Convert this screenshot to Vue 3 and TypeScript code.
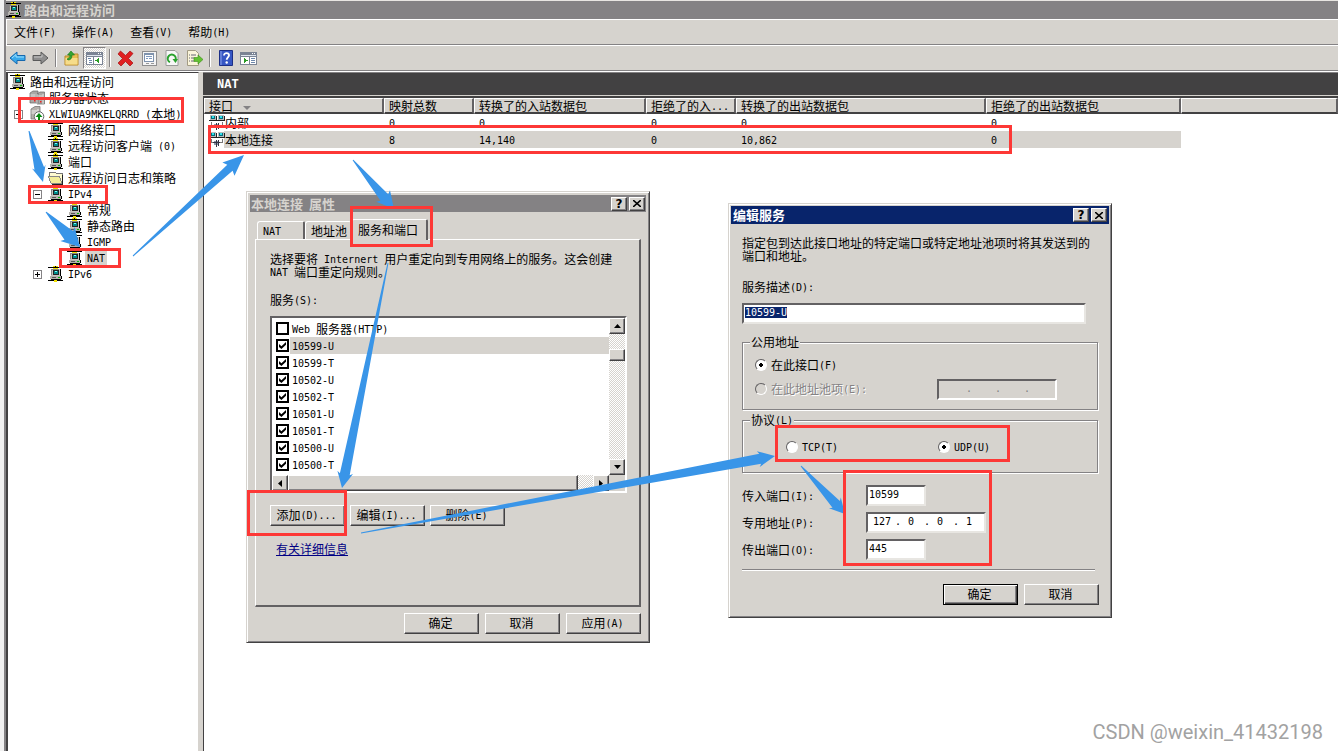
<script setup lang="ts">
import { computed, h, onMounted, reactive, ref } from 'vue'

/* Splits mixed text so that Latin runs keep half the width of an ideograph. */
const Txt = (props: { t: string }) =>
  h(
    'span',
    { class: 'txt' },
    (props.t.match(/[\x20-\x7e]+|[^\x20-\x7e]+/g) ?? []).map((run) =>
      /^[\x20-\x7e]/.test(run) ? h('span', { class: 'latin' }, run) : run,
    ),
  )
Txt.props = ['t']

type Glyph = 'net' | 'servers' | 'host' | 'folder'
interface TreeRow {
  label: string
  level: number
  icon: Glyph
  toggle?: '+' | '-'
  selected?: boolean
}

const menus = ['文件(F)', '操作(A)', '查看(V)', '帮助(H)']

const tree: TreeRow[] = [
  { label: '路由和远程访问', level: 0, icon: 'net' },
  { label: '服务器状态', level: 1, icon: 'servers' },
  { label: 'XLWIUA9MKELQRRD (本地)', level: 1, icon: 'host', toggle: '-' },
  { label: '网络接口', level: 2, icon: 'net' },
  { label: '远程访问客户端 (0)', level: 2, icon: 'net' },
  { label: '端口', level: 2, icon: 'net' },
  { label: '远程访问日志和策略', level: 2, icon: 'folder' },
  { label: 'IPv4', level: 2, icon: 'net', toggle: '-' },
  { label: '常规', level: 3, icon: 'net' },
  { label: '静态路由', level: 3, icon: 'net' },
  { label: 'IGMP', level: 3, icon: 'net' },
  { label: 'NAT', level: 3, icon: 'net', selected: true },
  { label: 'IPv6', level: 2, icon: 'net', toggle: '+' },
]

const columns = ['接口', '映射总数', '转换了的入站数据包', '拒绝了的入...', '转换了的出站数据包', '拒绝了的出站数据包', '']
const rows = [
  { cells: ['内部', '0', '0', '0', '0', '0'], selected: false },
  { cells: ['本地连接', '8', '14,140', '0', '10,862', '0'], selected: true },
]

const services = reactive([
  { name: 'Web 服务器(HTTP)', on: false },
  { name: '10599-U', on: true },
  { name: '10599-T', on: true },
  { name: '10502-U', on: true },
  { name: '10502-T', on: true },
  { name: '10501-U', on: true },
  { name: '10501-T', on: true },
  { name: '10500-U', on: true },
  { name: '10500-T', on: true },
])
const current = ref(1)

const description = ref('10599-U')
const address = ref('interface')
const protocol = ref('udp')
const inPort = ref('10599')
const outPort = ref('445')
const privateIp = reactive(['127', '0', '0', '1'])

const descriptionBox = ref<HTMLInputElement | null>(null)
onMounted(() => {
  descriptionBox.value?.focus()
  descriptionBox.value?.select()
})

/* Tapered arrows: start, tip, shaft half width, head half width, head length. */
const arrows = [
  [29, 131, 43, 182, 5, 7, 16],
  [46, 212, 80, 247, 6, 10, 18],
  [133, 256, 244, 155, 4, 9, 21],
  [353, 160, 394, 209, 5, 9, 17],
  [388, 263, 342, 488, 5, 8, 16],
  [361, 533, 775, 456, 5, 8, 17],
  [801, 466, 845, 514, 5, 8, 15],
]
const arrowPoints = computed(() =>
  arrows.map(([x1, y1, x2, y2, shaft, head, len]) => {
    const d = Math.hypot(x2 - x1, y2 - y1)
    const ux = (x2 - x1) / d
    const uy = (y2 - y1) / d
    const at = (back: number, side: number) =>
      `${(x2 - ux * back - uy * side).toFixed(1)},${(y2 - uy * back + ux * side).toFixed(1)}`
    return [at(d, 0.5), at(len - 2, shaft), at(len, head), at(0, 0), at(len, -head), at(len - 2, -shaft), at(d, -0.5)].join(' ')
  }),
)

const frames = [
  [18, 97, 184, 123],
  [28, 185, 108, 204],
  [59, 248, 121, 268],
  [208, 125, 1012, 154],
  [350, 206, 433, 247],
  [247, 490, 347, 536],
  [775, 425, 1010, 462],
  [843, 470, 992, 566],
]
</script>

<template>
  <div class="screen">
    <svg width="0" height="0" class="defs" aria-hidden="true">
      <symbol id="net" viewBox="0 0 16 16" shape-rendering="crispEdges">
        <path d="M0 1h15v1H0zM0 14h15v1H0zM6 0h3v2H6zM6 13h3v2H6z" fill="#000" />
        <path d="M5 0h2v1H5zM8 0h2v1H8zM5 2h5v1H5zM6 14h3v2H6z" fill="#f0e000" />
        <path d="M3 3h9v7H3z" fill="#c9c6c1" />
        <path d="M3 3h8v1H3zM3 3h1v6H3z" fill="#8a8884" />
        <path d="M12 3h1v7h-1zM13 10h1v3h-1zM3 13h10v1H3z" fill="#000" />
        <path d="M5 4h6v5H5z" fill="#222" />
        <path d="M6 5h4v3H6z" fill="#008b8b" />
        <path d="M7 5h2v1H7z" fill="#7ff" />
        <path d="M2 10h11v3H2z" fill="#b5b2ad" />
        <path d="M4 11h4v1H4z" fill="#555" />
        <path d="M10 11h2v1h-2z" fill="#0b0" />
      </symbol>
      <symbol id="servers" viewBox="0 0 16 16">
        <path d="M1 3l3-2h5v12H1zM8 4l3-2h4.500v12H8z" fill="#aaa8a5" stroke="#666" stroke-width=".7" />
        <path d="M1.500 5h5M1.500 7h5M8.500 6h5M8.500 8h5M8 4v10M14 4v10" stroke="#eee" stroke-width=".8" />
        <path d="M5 10h1.500v1.500H5zM11 11h1.500v1.500H11z" fill="#e22" />
      </symbol>
      <symbol id="host" viewBox="0 0 16 16">
        <path d="M2 3l4-2.500h5V13H2z" fill="#b5b2ad" stroke="#777" stroke-width=".8" />
        <path d="M2.500 5h6M2.500 7h5M9 3v3" stroke="#eee" stroke-width="1" />
        <circle cx="10" cy="10.500" r="4.800" fill="#fff" stroke="#666" />
        <path d="M10 7l3.500 4H11v3H9v-3H6.500z" fill="#098a12" />
      </symbol>
      <symbol id="folder" viewBox="0 0 16 16" shape-rendering="crispEdges">
        <path d="M1 5l1-3h5l1 1h6v10H3z" fill="#fffbd0" stroke="#777" />
        <path d="M0 6h11l3 7H3z" fill="#f3ee98" stroke="#888" />
        <path d="M15 5v10H4v-1h10V5z" fill="#222" />
      </symbol>
      <symbol id="link" viewBox="0 0 16 16" shape-rendering="crispEdges">
        <path d="M1 0h6v5H1zM9 0h6v5H9z" fill="#bbb" />
        <path d="M2 1h4v3H2zM10 1h4v3h-4z" fill="#056c7c" />
        <path d="M3 1h2v2H3zM11 1h2v2h-2z" fill="#2fe3ee" />
        <path d="M0 5h8v1H0zM8 5h8v1H8zM7 1v4h1V1zM15 1h1v4h-1z" fill="#222" />
        <path d="M2 7h1v3h3v1H2zM13 7h1v4h-4v-1h3z" fill="#777" />
        <path d="M5 9h5v4H5z" fill="#8b98a8" />
        <path d="M7 8h1v7H7zM9 8h1v6H9zM4 10h7v1H4z" fill="#334" />
      </symbol>
    </svg>

    <div class="backdrop"></div>
    <main class="app">
      <header class="caption">
        <svg width="16" height="16"><use href="#net" /></svg>
        <Txt t="路由和远程访问" />
      </header>
      <nav class="menu">
        <button v-for="m in menus" :key="m" type="button"><Txt :t="m" /></button>
      </nav>
      <div class="toolbar">
        <button type="button" aria-label="后退">
          <svg width="17" height="16" viewBox="0 0 17 16"><path d="M1 8l7-6v3.500h8v5H8V14z" fill="#38a8ea" stroke="#1668ae" /><path d="M3 8l4-3.500V7h8" fill="none" stroke="#9be0ff" /></svg>
        </button>
        <button type="button" aria-label="前进">
          <svg width="17" height="16" viewBox="0 0 17 16"><path d="M16 8L9 2v3.500H1v5h8V14z" fill="#8e8e8e" stroke="#5a5a5a" /><path d="M2 7h8V4.500" fill="none" stroke="#c4c4c4" /></svg>
        </button>
        <i class="sep"></i>
        <button type="button" aria-label="向上一级">
          <svg width="16" height="16" viewBox="0 0 16 16"><path d="M1 6h4l1-2h8v11H1z" fill="#e8bd52" stroke="#b98a2a" /><path d="M1.500 8h12v6.500h-12z" fill="#f6dc8a" /><path d="M4 10c3 0 4-2 4-5h2.500L7 1 3.500 5H6c0 2-1 3-3 4z" fill="#35a532" stroke="#187818" stroke-width=".6" /></svg>
        </button>
        <button type="button" class="pressed" aria-label="显示控制台树">
          <svg width="17" height="15" viewBox="0 0 17 15" shape-rendering="crispEdges"><path d="M0 1h17v13H0z" fill="#7b8494" /><path d="M1 4h15v1H1z" fill="#dfe5ee" /><path d="M1 6h6v7H1zM8 6h8v7H8z" fill="#fff" /><path d="M2 7h3v1H2zM3 9h3v1H3zM3 11h3v1H3z" fill="#6d87ab" /><path d="M13 7v5L9 9.500z" fill="#2a9b25" /><path d="M12 2h1v1h-1zM14 2h1v1h-1z" fill="#fff" /></svg>
        </button>
        <i class="sep"></i>
        <button type="button" aria-label="删除">
          <svg width="17" height="17" viewBox="0 0 17 17"><path d="M3.500 1L8.500 5.500 13 1l3 2.500L11.500 8.500 16 13l-3 3-4.500-4.500L4 16l-3-3 4.500-4.500L1 4z" fill="#e02020" stroke="#a31212" stroke-width=".7" /></svg>
        </button>
        <button type="button" aria-label="属性">
          <svg width="16" height="16" viewBox="0 0 16 16" shape-rendering="crispEdges"><path d="M1 1h14v14H1z" fill="#f4f4f4" stroke="#8f8f8f" /><path d="M3 3h10v9H3z" fill="#7f93ad" /><path d="M4 5h8v6H4z" fill="#fff" /><path d="M5 6h6v1H5zM5 8h2v1H5zM8 8h3v1H8z" fill="#7f9abf" /><path d="M5 13h3v1H5zM10 13h3v1h-3z" fill="#999" /></svg>
        </button>
        <button type="button" aria-label="刷新">
          <svg width="16" height="16" viewBox="0 0 16 16"><path d="M2 .5h9l3 3v12H2z" fill="#f7f7f7" stroke="#9a9a9a" /><path d="M6 12.200A4 4 0 1 1 11.500 10" fill="none" stroke="#2aa22e" stroke-width="2" /><path d="M8.500 9h5.500l-2.500 4z" fill="#2aa22e" /></svg>
        </button>
        <button type="button" aria-label="导出列表">
          <svg width="17" height="16" viewBox="0 0 17 16"><path d="M1.500 .5h8l3 3v12h-11z" fill="#fbf5da" stroke="#a29b84" /><path d="M3 5h1M5 5h5M3 8h1M5 8h3M3 11h1M5 11h3" stroke="#667" /><path d="M8 7.500h4V5l5 4.500-5 4.500v-2.500H8z" fill="#63c232" stroke="#3c8f1a" stroke-width=".6" /></svg>
        </button>
        <i class="sep"></i>
        <button type="button" aria-label="帮助">
          <svg width="14" height="16" viewBox="0 0 14 16"><path d="M.5 .5h13v15H.5z" fill="#3757c4" stroke="#1c2f86" /><path d="M2 1v14" stroke="#8ea4ea" /><path d="M5 5.500c0-3.400 5.500-3 5 0-.3 1.800-2.300 2-2.300 4.200" fill="none" stroke="#fff" stroke-width="1.800" /><circle cx="7.700" cy="12.500" r="1.200" fill="#fff" /></svg>
        </button>
        <button type="button" aria-label="显示操作窗格">
          <svg width="17" height="15" viewBox="0 0 17 15" shape-rendering="crispEdges"><path d="M0 1h17v13H0z" fill="#7b8494" /><path d="M1 4h15v1H1z" fill="#dfe5ee" /><path d="M1 6h8v7H1zM10 6h6v7h-6z" fill="#fff" /><path d="M11 7h4v1h-4zM11 9h4v1h-4zM11 11h4v1h-4z" fill="#6d87ab" /><path d="M4 7v5l4-2.500z" fill="#2a9b25" /><path d="M12 2h1v1h-1zM14 2h1v1h-1z" fill="#fff" /></svg>
        </button>
      </div>

      <div class="split">
        <ul class="tree">
          <li v-for="node in tree" :key="node.label" :class="'level' + node.level">
            <span v-if="node.level" class="slot">
              <button v-if="node.toggle" type="button" class="toggle" :class="{ plus: node.toggle === '+' }" :aria-label="node.label"></button>
            </span>
            <svg width="16" height="16"><use :href="'#' + node.icon" /></svg>
            <span class="name" :class="{ selected: node.selected }"><Txt :t="node.label" /></span>
          </li>
        </ul>

        <section class="pane">
          <h1><Txt t="NAT" /></h1>
          <div class="list">
            <table>
              <colgroup>
                <col class="c1" /><col class="c2" /><col class="c3" /><col class="c2" /><col class="c5" /><col class="c6" /><col />
              </colgroup>
              <thead>
                <tr>
                  <th v-for="(c, i) in columns" :key="i">
                    <Txt :t="c" />
                    <svg v-if="i === 0" class="sort" width="8" height="4" viewBox="0 0 8 4"><path d="M0 0h8L4 4z" fill="#848284" /></svg>
                  </th>
                </tr>
              </thead>
              <tbody>
                <tr v-for="r in rows" :key="r.cells[0]" :class="{ selected: r.selected }">
                  <td v-for="(c, i) in r.cells" :key="i">
                    <div v-if="i === 0" class="first">
                      <svg width="16" height="16"><use href="#link" /></svg>
                      <Txt :t="c" />
                    </div>
                    <Txt v-else :t="c" />
                  </td>
                  <td></td>
                </tr>
              </tbody>
            </table>
          </div>
        </section>
      </div>
    </main>

    <section class="dialog properties" aria-label="本地连接 属性">
      <header class="bar">
        <Txt t="本地连接 属性" />
        <span class="tools">
          <button type="button" aria-label="帮助">?</button>
          <button type="button" aria-label="关闭"><svg width="8" height="7" viewBox="0 0 8 7"><path d="M0 0l8 7M8 0L0 7" stroke="#000" stroke-width="1.600" /></svg></button>
        </span>
      </header>
      <div class="tabs" role="tablist">
        <button type="button" role="tab" class="t1"><Txt t="NAT" /></button>
        <button type="button" role="tab" class="t2"><Txt t="地址池" /></button>
        <button type="button" role="tab" class="t3 active" aria-selected="true"><Txt t="服务和端口" /></button>
      </div>
      <div class="sheet">
        <p class="note"><Txt t="选择要将 Internert 用户重定向到专用网络上的服务。这会创建" /><br /><Txt t="NAT 端口重定向规则。" /></p>
        <div class="caption-line" id="services-label"><Txt t="服务(S):" /></div>
        <div class="services">
          <ul aria-labelledby="services-label">
            <li v-for="(s, i) in services" :key="s.name" :class="{ selected: i === current }" @click="current = i">
              <input :id="'svc' + i" v-model="s.on" type="checkbox" />
              <label :for="'svc' + i"><Txt :t="s.name" /></label>
            </li>
          </ul>
          <div class="vscroll">
            <button type="button" aria-label="向上滚动"><svg width="7" height="4" viewBox="0 0 7 4"><path d="M0 4h7L3.500 0z" /></svg></button>
            <i class="before"></i>
            <i class="thumb"></i>
            <i class="after"></i>
            <button type="button" aria-label="向下滚动"><svg width="7" height="4" viewBox="0 0 7 4"><path d="M0 0h7L3.500 4z" /></svg></button>
          </div>
          <div class="hscroll">
            <button type="button" aria-label="向左滚动"><svg width="4" height="7" viewBox="0 0 4 7"><path d="M4 0v7L0 3.500z" /></svg></button>
            <i class="thumb"></i>
            <i class="after"></i>
            <button type="button" aria-label="向右滚动"><svg width="4" height="7" viewBox="0 0 4 7"><path d="M0 0v7l4-3.500z" /></svg></button>
          </div>
        </div>
        <div class="row">
          <button type="button" class="btn"><Txt t="添加(D)..." /></button>
          <button type="button" class="btn"><Txt t="编辑(I)..." /></button>
          <button type="button" class="btn"><Txt t="删除(E)" /></button>
        </div>
        <a href="#more">有关详细信息</a>
      </div>
      <footer>
        <button type="button" class="btn">确定</button>
        <button type="button" class="btn">取消</button>
        <button type="button" class="btn"><Txt t="应用(A)" /></button>
      </footer>
    </section>

    <section class="dialog service" aria-label="编辑服务">
      <header class="bar">
        <Txt t="编辑服务" />
        <span class="tools">
          <button type="button" aria-label="帮助">?</button>
          <button type="button" aria-label="关闭"><svg width="8" height="7" viewBox="0 0 8 7"><path d="M0 0l8 7M8 0L0 7" stroke="#000" stroke-width="1.600" /></svg></button>
        </span>
      </header>
      <div class="content">
        <p class="note">指定包到达此接口地址的特定端口或特定地址池项时将其发送到的<br />端口和地址。</p>
        <label class="desc-label" for="desc"><Txt t="服务描述(D):" /></label>
        <input id="desc" ref="descriptionBox" v-model="description" class="field desc" type="text" />
        <fieldset class="public">
          <legend>公用地址</legend>
          <div class="line">
            <input id="iface" v-model="address" type="radio" name="address" value="interface" />
            <label for="iface"><Txt t="在此接口(F)" /></label>
          </div>
          <div class="line">
            <input id="pool" v-model="address" type="radio" name="address" value="pool" disabled />
            <label for="pool" class="off"><Txt t="在此地址池项(E):" /></label>
            <span class="field ip off">
              <template v-for="n in 4" :key="n">
                <input type="text" disabled :aria-label="'地址池项 ' + n" /><b v-if="n < 4">.</b>
              </template>
            </span>
          </div>
        </fieldset>
        <fieldset class="protocol">
          <legend><Txt t="协议(L)" /></legend>
          <div class="line">
            <input id="tcp" v-model="protocol" type="radio" name="protocol" value="tcp" />
            <label for="tcp"><Txt t="TCP(T)" /></label>
          </div>
          <div class="line">
            <input id="udp" v-model="protocol" type="radio" name="protocol" value="udp" />
            <label for="udp"><Txt t="UDP(U)" /></label>
          </div>
        </fieldset>
        <div class="form">
          <label for="inport"><Txt t="传入端口(I):" /></label>
          <input id="inport" v-model="inPort" class="field" type="text" />
          <label for="ip0"><Txt t="专用地址(P):" /></label>
          <span class="field ip">
            <template v-for="(part, n) in privateIp" :key="n">
              <input :id="'ip' + n" v-model="privateIp[n]" type="text" :aria-label="'专用地址 ' + (n + 1)" /><b v-if="n < 3">.</b>
            </template>
          </span>
          <label for="outport"><Txt t="传出端口(O):" /></label>
          <input id="outport" v-model="outPort" class="field" type="text" />
        </div>
        <hr />
        <footer>
          <button type="button" class="btn default">确定</button>
          <button type="button" class="btn">取消</button>
        </footer>
      </div>
    </section>

    <svg class="marks" width="1338" height="751" viewBox="0 0 1338 751" aria-hidden="true">
      <polygon v-for="p in arrowPoints" :key="p" :points="p" fill="#3995e8" />
      <rect
        v-for="f in frames"
        :key="f.join()"
        :x="f[0] + 1.5"
        :y="f[1] + 1.5"
        :width="f[2] - f[0] - 3"
        :height="f[3] - f[1] - 3"
        fill="none"
        stroke="#fd3836"
        stroke-width="3"
      />
    </svg>
    <div class="watermark">CSDN @weixin_41432198</div>
  </div>
</template>

<style>
body {
  margin: 0;
  background: #fff;
}
.txt {
  white-space: pre;
}
.latin {
  font-family: 'DejaVu Sans Mono', 'Liberation Mono', monospace;
  font-size: 10px;
  line-height: 0;
  vertical-align: 1px;
}
</style>

<style scoped>
.screen {
  position: relative;
  display: flex;
  min-height: 100vh;
  overflow: hidden;
  font: 12px/16px 'Noto Sans CJK SC', sans-serif;
  color: #000;
}
.screen *,
.screen *::before {
  box-sizing: border-box;
}
.defs {
  position: absolute;
}
button,
input {
  margin: 0;
  padding: 0;
  font: inherit;
  color: inherit;
  border-radius: 0;
  outline: none;
}
button {
  border: 0;
  background: #d6d3ce;
}
svg {
  flex: none;
}
ul {
  margin: 0;
  padding: 0;
  list-style: none;
}

/* Console window */
.backdrop {
  flex: none;
  width: 6px;
  background: #f1f1f1;
  border-right: 2px solid #848284;
}
.app {
  flex: 1;
  min-width: 0;
  display: flex;
  flex-direction: column;
  background: #d6d3ce;
}
.caption {
  display: flex;
  align-items: center;
  gap: 2px;
  height: 19px;
  border-top: 1px solid #e8e6e2;
  background: #848284;
  color: #d6d3ce;
  font-size: 13px;
  line-height: 16px;
  font-weight: bold;
}
.menu {
  display: flex;
  height: 27px;
  padding-bottom: 1px;
  border-bottom: 1px solid #fff;
  box-shadow: inset 1px 1px #fff, inset 0 -1px #848284;
}
.menu button {
  padding: 0 8px;
  background: none;
}
.toolbar {
  display: flex;
  align-items: center;
  height: 25px;
  border-bottom: 1px solid #848284;
}
.toolbar button {
  display: flex;
  align-items: center;
  justify-content: center;
  width: 23px;
  height: 22px;
}
.toolbar .pressed {
  border: 1px solid;
  border-color: #848284 #fff #fff #848284;
  background: repeating-conic-gradient(#fff 0 25%, #d6d3ce 0 50%) 0 0 / 2px 2px;
}
.sep {
  width: 8px;
  height: 18px;
  background: linear-gradient(90deg, #0000 3px, #848284 3px 4px, #fff 4px 5px, #0000 5px);
}
.split {
  flex: 1;
  display: flex;
  gap: 4px;
  border-top: 1px solid #fff;
}
.tree {
  flex: none;
  width: 193px;
  padding-top: 1px;
  background: #fff;
  border: solid #424142;
  border-width: 1px 1px 0 2px;
  border-right-color: #d6d3ce;
}
.tree li {
  display: flex;
  align-items: center;
  height: 16px;
  white-space: nowrap;
}
.tree .level0 {
  padding-left: 2px;
}
.tree .level1 {
  padding-left: 6px;
}
.tree .level2 {
  padding-left: 25px;
}
.tree .level3 {
  padding-left: 44px;
}
.slot {
  display: flex;
  width: 15px;
}
.toggle {
  width: 9px;
  height: 9px;
  border: 1px solid #848284;
  background: linear-gradient(#000, #000) center / 5px 1px no-repeat #fff;
}
.toggle.plus {
  background: linear-gradient(#000, #000) center / 5px 1px no-repeat, linear-gradient(#000, #000) center / 1px 5px no-repeat, #fff;
}
.name {
  margin-left: 2px;
  padding: 0 2px;
}
.name.selected {
  background: #d6d3ce;
}
.pane {
  flex: 1;
  min-width: 0;
  display: flex;
  flex-direction: column;
}
.pane h1 {
  height: 23px;
  margin: 0;
  padding-left: 14px;
  background: #424142;
  color: #fff;
  font-size: 12px;
  line-height: 21px;
  border-top: 1px solid #848284;
}
.pane h1 :deep(.latin) {
  font-family: 'Liberation Mono', monospace;
  font-size: 12px;
}
.list {
  flex: 1;
  margin-top: 1px;
  border-top: 2px solid #424142;
  border-left: 1px solid #424142;
  background: #fff;
}
table {
  width: 100%;
  table-layout: fixed;
  border-collapse: separate;
  border-spacing: 0;
}
.c1 {
  width: 180px;
}
.c2 {
  width: 90px;
}
.c3 {
  width: 172px;
}
.c5 {
  width: 250px;
}
.c6 {
  width: 195px;
}
th {
  height: 16px;
  padding: 0 0 0 4px;
  overflow: hidden;
  background: #d6d3ce;
  border: solid;
  border-width: 1px 2px 2px 1px;
  border-color: #fff #636163 #424142 #fff;
  font-weight: normal;
  line-height: 13px;
  text-align: left;
  white-space: nowrap;
}
.sort {
  margin: 0 0 1px 10px;
}
td {
  height: 17px;
  padding: 0 0 0 5px;
  line-height: 16px;
}
.selected td {
  background: #d6d3ce;
}
.selected td:first-child {
  background: linear-gradient(90deg, #fff 20px, #d6d3ce 20px);
}
.selected td:last-child {
  background: none;
}
.first {
  display: flex;
  align-items: center;
  height: 16px;
}

/* Dialog frames */
.dialog {
  position: absolute;
  background: #d6d3ce;
  border: 1px solid;
  border-color: #d6d3ce #424142 #424142 #d6d3ce;
  box-shadow: inset 1px 1px #fff, inset -1px -1px #848284;
}
.properties {
  left: 246px;
  top: 191px;
  width: 404px;
  padding: 3px 3px 8px;
}
.service {
  left: 728px;
  top: 203px;
  width: 384px;
  padding: 2px;
}
.bar {
  display: flex;
  align-items: center;
  justify-content: space-between;
  height: 17px;
  padding: 0 1px;
  background: #848284;
  color: #d6d3ce;
  font-size: 13px;
  font-weight: bold;
}
.service .bar {
  height: 18px;
  padding: 0 2px;
  background: #08246b;
  color: #fff;
}
.tools {
  display: flex;
  gap: 2px;
}
.tools button {
  display: flex;
  align-items: center;
  justify-content: center;
  width: 16px;
  height: 14px;
  color: #000;
  font: bold 12px/12px 'DejaVu Sans', sans-serif;
}
.tools button,
.thumb,
.vscroll button,
.hscroll button {
  background: #d6d3ce;
  border: 1px solid;
  border-color: #fff #424142 #424142 #fff;
  box-shadow: inset -1px -1px #848284;
}
.tabs {
  display: flex;
  align-items: flex-end;
  height: 27px;
  padding-left: 7px;
}
.tabs button {
  height: 18px;
  padding-left: 5px;
  border: solid;
  border-width: 1px 2px 0 1px;
  border-color: #fff #636163 #fff #fff;
  border-radius: 3px 2px 0 0;
  text-align: left;
  white-space: nowrap;
}
.tabs .t1 {
  width: 48px;
}
.tabs .t2 {
  width: 46px;
  border-right: 0;
}
.tabs .active {
  position: relative;
  width: 77px;
  height: 21px;
  margin-bottom: -1px;
  padding-left: 6px;
}
.sheet {
  margin: 0 5px;
  padding: 12px 12px 48px 14px;
  border: solid;
  border-width: 1px 2px 2px 1px;
  border-color: #fff #636163 #636163 #fff;
}
.note {
  margin: 0;
  line-height: 13px;
  white-space: nowrap;
}
.caption-line {
  margin: 14px 0 8px;
}
.services {
  display: grid;
  grid-template-columns: 1fr 16px;
  border: 2px solid;
  border-color: #636163 #fff #fff #636163;
}
.services ul {
  padding: 2px 0;
  background: #fff;
}
.services li {
  display: flex;
  align-items: center;
  height: 17px;
  padding-left: 4px;
}
.services li.selected {
  background: linear-gradient(90deg, #fff 18px, #d6d3ce 18px);
}
.services label {
  margin-left: 3px;
}
input[type='checkbox'] {
  appearance: none;
  width: 13px;
  height: 13px;
  border: 2px solid #000;
  background: #fff;
}
input[type='checkbox']:checked::before {
  content: '';
  display: block;
  width: 7px;
  height: 7px;
  margin: 1px;
  background: #000;
  clip-path: polygon(0 30%, 35% 60%, 100% 0, 100% 40%, 35% 100%, 0 70%);
}
.vscroll,
.hscroll {
  display: flex;
  background: repeating-conic-gradient(#fff 0 25%, #d6d3ce 0 50%) 0 0 / 2px 2px;
}
.vscroll {
  flex-direction: column;
}
.vscroll button,
.hscroll button {
  display: flex;
  align-items: center;
  justify-content: center;
  width: 16px;
  height: 16px;
}
.vscroll .before {
  height: 15px;
}
.vscroll .thumb {
  height: 12px;
}
.vscroll .after {
  flex: 1;
}
.hscroll .thumb {
  flex: 1;
}
.hscroll .after {
  width: 15px;
}
.row {
  display: flex;
  gap: 5px;
  margin: 12px 0 15px;
}
.btn {
  width: 75px;
  height: 21px;
  padding: 0 2px 2px 0;
  border: 1px solid;
  border-color: #fff #424142 #424142 #fff;
  box-shadow: inset -1px -1px #848284;
  line-height: 16px;
  white-space: nowrap;
}
.btn.default {
  border-color: #000;
  box-shadow: inset 1px 1px #fff, inset -1px -1px #424142, inset -2px -2px #848284;
}
.sheet a {
  display: block;
  margin-left: 6px;
  color: #000084;
}
footer {
  display: flex;
  justify-content: flex-end;
  gap: 6px;
}
.properties footer {
  margin: 6px 5px 0 0;
}

/* Edit dialog */
.content {
  padding: 12px 10px 10px 11px;
}
.desc-label {
  display: block;
  margin: 17px 0 8px;
}
.field {
  display: block;
  width: 60px;
  height: 21px;
  padding: 0 0 2px 1px;
  border: 2px solid;
  border-color: #636163 #e8e6e2 #e8e6e2 #636163;
  background: #fff;
  font: 10px/15px 'DejaVu Sans Mono', 'Liberation Mono', monospace;
}
.field.desc {
  width: calc(100% - 13px);
}
.field::selection {
  background: #08246b;
  color: #fff;
}
.field.ip {
  display: flex;
  width: 120px;
  padding: 0 0 0 1px;
}
.ip input {
  width: 26px;
  height: 15px;
  border: 0;
  background: none;
  text-align: center;
}
.ip b {
  width: 3px;
  font-weight: normal;
}
.ip.off {
  margin-left: auto;
  background: none;
  border-color: #636163 #fff #fff #636163;
  color: #848284;
}
fieldset {
  margin: 0 1px 0 0;
  min-width: 0;
  border: 1px solid #848284;
  box-shadow: 1px 1px #fff, inset 1px 1px #fff;
}
legend {
  padding: 0 1px;
  background: #d6d3ce;
  line-height: 12px;
}
.public {
  margin-top: 12px;
  padding: 5px 40px 8px 12px;
}
.protocol {
  display: grid;
  grid-template-columns: 152px 1fr;
  margin-top: 4px;
  padding: 9px 0 13px 43px;
}
.public legend {
  margin-left: -5px;
}
.protocol legend {
  margin-left: -36px;
}
.line {
  display: flex;
  align-items: center;
  gap: 4px;
  height: 24px;
}
input[type='radio'] {
  appearance: none;
  width: 12px;
  height: 12px;
  border: 1px solid;
  border-color: #636163 #fff #fff #636163;
  border-radius: 50%;
  background: #fff;
}
input[type='radio']:checked {
  background: radial-gradient(circle, #000 2px, #fff 2px);
}
input[type='radio']:disabled {
  background: #d6d3ce;
}
label.off {
  color: #848284;
  text-shadow: 1px 1px #fff;
}
.form {
  display: grid;
  grid-template-columns: 124px 1fr;
  row-gap: 6px;
  align-items: center;
  margin-top: 12px;
}
.form label {
  line-height: 15px;
}
hr {
  height: 2px;
  margin: 9px 4px 13px 0;
  border: solid;
  border-width: 1px 0;
  border-color: #848284 #fff #fff;
}

.marks {
  position: absolute;
  left: 0;
  top: 0;
  pointer-events: none;
}
.watermark {
  position: absolute;
  right: 15px;
  bottom: 7px;
  color: #a2a2a2;
  font: 20px/24px Roboto, sans-serif;
}
</style>
